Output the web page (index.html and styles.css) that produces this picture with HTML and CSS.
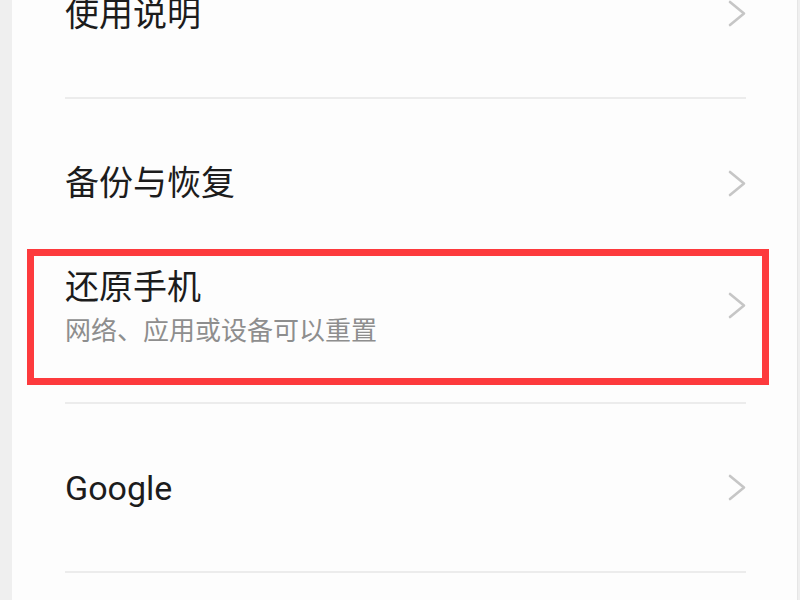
FILE: index.html
```html
<!DOCTYPE html>
<html lang="zh-CN">
<head>
    <meta charset="UTF-8">
    <meta name="viewport" content="width=device-width, initial-scale=1.0">
    <title>设置</title>
    <link rel="stylesheet" href="styles.css">
</head>
<body>

<div class="panel">
    <div class="item item-top">
        <span class="title">使用说明</span>
        <svg class="arrow" width="18" height="27" viewBox="0 0 18 27"><path d="M2 2 L16 13.5 L2 25"/></svg>
    </div>
    <div class="divider"></div>

    <div class="item item-backup">
        <span class="title">备份与恢复</span>
        <svg class="arrow" width="18" height="27" viewBox="0 0 18 27"><path d="M2 2 L16 13.5 L2 25"/></svg>
    </div>

    <div class="marked">
        <div class="item item-reset">
            <div class="text">
                <div class="title">还原手机</div>
                <div class="sub">网络、应用或设备可以重置</div>
            </div>
            <svg class="arrow" width="18" height="27" viewBox="0 0 18 27"><path d="M2 2 L16 13.5 L2 25"/></svg>
        </div>
    </div>
    <div class="divider divider-after"></div>

    <div class="item item-google">
        <span class="title">Google</span>
        <svg class="arrow" width="18" height="27" viewBox="0 0 18 27"><path d="M2 2 L16 13.5 L2 25"/></svg>
    </div>
    <div class="divider"></div>
</div>

</body>
</html>
```

FILE: styles.css
```css
body {
    margin: 0;
    background: #efefef;
    font-family: Roboto, "Noto Sans CJK SC", sans-serif;
    color: #1c1c1c;
    overflow: hidden;
}
.panel {
    display: flow-root;
    margin-left: 12px;
    width: 785px;
    height: 600px;
    background: #fdfdfd;
    border-right: 1px solid #e6e6e6;
}
.item {
    display: flex;
    align-items: center;
    justify-content: space-between;
    padding: 0 51px 0 53px;
    box-sizing: border-box;
}
.title {
    font-size: 34px;
    line-height: 44px;
}
.arrow path {
    fill: none;
    stroke: #c6c6c6;
    stroke-width: 2.6;
    stroke-linecap: round;
    stroke-linejoin: round;
}
.item-top {
    margin-top: -70px;
    height: 167px;
}
.item-backup {
    height: 150px;
    padding-top: 18px;
}
.divider {
    height: 2px;
    margin: 0 51px 0 53px;
    background: #ececec;
}
.marked {
    margin: 0 28px 0 15px;
    border: 7px solid #fd3a3d;
}
.item-reset {
    padding: 9px 16px 25px 31px;
}
.item-reset .arrow {
    margin-bottom: 8px;
}
.sub {
    font-size: 26px;
    line-height: 44px;
    color: #8e8e8e;
}
.divider-after {
    margin-top: 17px;
}
.item-google {
    height: 167px;
}
```
